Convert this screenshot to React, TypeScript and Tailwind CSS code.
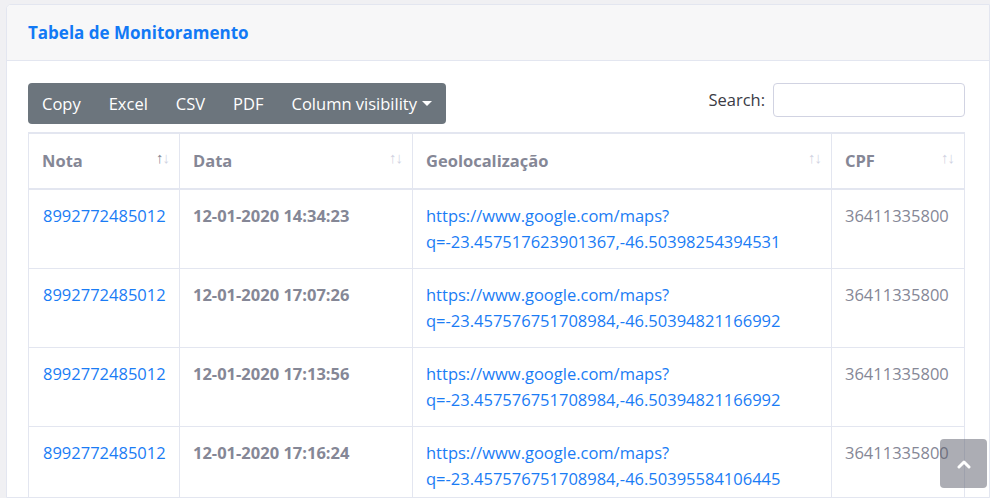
import React from 'react';

const rows = [
    { nota: '8992772485012', data: '12-01-2020 14:34:23', lat: '-23.457517623901367', lng: '-46.50398254394531', cpf: '36411335800' },
    { nota: '8992772485012', data: '12-01-2020 17:07:26', lat: '-23.457576751708984', lng: '-46.50394821166992', cpf: '36411335800' },
    { nota: '8992772485012', data: '12-01-2020 17:13:56', lat: '-23.457576751708984', lng: '-46.50394821166992', cpf: '36411335800' },
    { nota: '8992772485012', data: '12-01-2020 17:16:24', lat: '-23.457576751708984', lng: '-46.50395584106445', cpf: '36411335800' },
];

function SortIcon({ active = false }: { active?: boolean }) {
    return (
        <span className="absolute right-[10px] top-[16px] text-[15px] leading-none tracking-[-1px] text-[#d1d3e2] select-none">
            <span className={active ? 'text-[#858796]' : ''}>↑</span>
            <span>↓</span>
        </span>
    );
}

export default function App() {
    const th = 'relative border border-[#e3e6f0] border-b-2 px-[13px] pt-[14px] pb-[14px] text-left font-bold align-bottom';
    const td = 'border border-[#e3e6f0] px-[13px] py-[13px] align-top';

    return (
        <div className="min-h-[498px] bg-[#f0f0f3] pl-[6px] pt-[4px] text-[16.5px] leading-[26px] text-[#858796]" style={{ fontFamily: '"Open Sans", "Noto Sans", sans-serif' }}>
            <div className="relative h-[494px] overflow-hidden rounded-tl-[5px] border border-[#e3e6f0] bg-white">
                <div className="flex h-[56px] items-center border-b border-[#e3e6f0] bg-[#f7f7f8] px-[21px]">
                    <h6 className="text-[17px] font-bold text-[#1279f5]">Tabela de Monitoramento</h6>
                </div>

                <div className="pl-[21px] pr-[24px] pt-[22px]">
                    <div className="flex items-start justify-between">
                        <div className="flex h-[41px] overflow-hidden rounded-[4px] bg-[#6c757d] text-white">
                            <button className="px-[14px]">Copy</button>
                            <button className="px-[14px]">Excel</button>
                            <button className="px-[14px]">CSV</button>
                            <button className="px-[14px]">PDF</button>
                            <button className="flex items-center px-[14px]">
                                Column visibility
                                <span className="ml-[5px] inline-block border-x-[5px] border-t-[5px] border-x-transparent border-t-white"></span>
                            </button>
                        </div>
                        <label className="flex items-center gap-[8px] text-[#3a3b45]">
                            Search:
                            <input type="text" className="h-[34px] w-[192px] rounded-[4px] border border-[#d1d3e2] bg-white px-2 outline-none" />
                        </label>
                    </div>

                    <table className="mt-[8px] w-[936px] table-fixed border-collapse border-t-[2px] border-[#e3e6f0]">
                        <colgroup>
                            <col className="w-[151px]" />
                            <col className="w-[233px]" />
                            <col className="w-[419px]" />
                            <col className="w-[133px]" />
                        </colgroup>
                        <thead>
                            <tr>
                                <th className={th}>Nota<SortIcon active /></th>
                                <th className={th}>Data<SortIcon /></th>
                                <th className={th}>Geolocalização<SortIcon /></th>
                                <th className={th}>CPF<SortIcon /></th>
                            </tr>
                        </thead>
                        <tbody>
                            {rows.map((r, i) => (
                                <tr key={i}>
                                    <td className={td + ' pl-[14px]'}><a className="text-[#1a7cf5]" href="#">{r.nota}</a></td>
                                    <td className={td + ' font-bold'}>{r.data}</td>
                                    <td className={td}>
                                        <a className="text-[#1a7cf5]" href="#">
                                            https://www.google.com/maps?<br />q={r.lat},{r.lng}
                                        </a>
                                    </td>
                                    <td className={td}>{r.cpf}</td>
                                </tr>
                            ))}
                        </tbody>
                    </table>
                </div>

                <a href="#" className="absolute bottom-[9px] right-[2px] flex h-[49px] w-[47px] items-center justify-center rounded-[4px] bg-[rgba(90,92,105,0.5)]">
                    <svg width="14" height="10" viewBox="0 0 14 10" fill="none" stroke="white" strokeWidth="3" strokeLinecap="round" strokeLinejoin="round">
                        <path d="M2 8l5-5 5 5" />
                    </svg>
                </a>
            </div>
        </div>
    );
}
